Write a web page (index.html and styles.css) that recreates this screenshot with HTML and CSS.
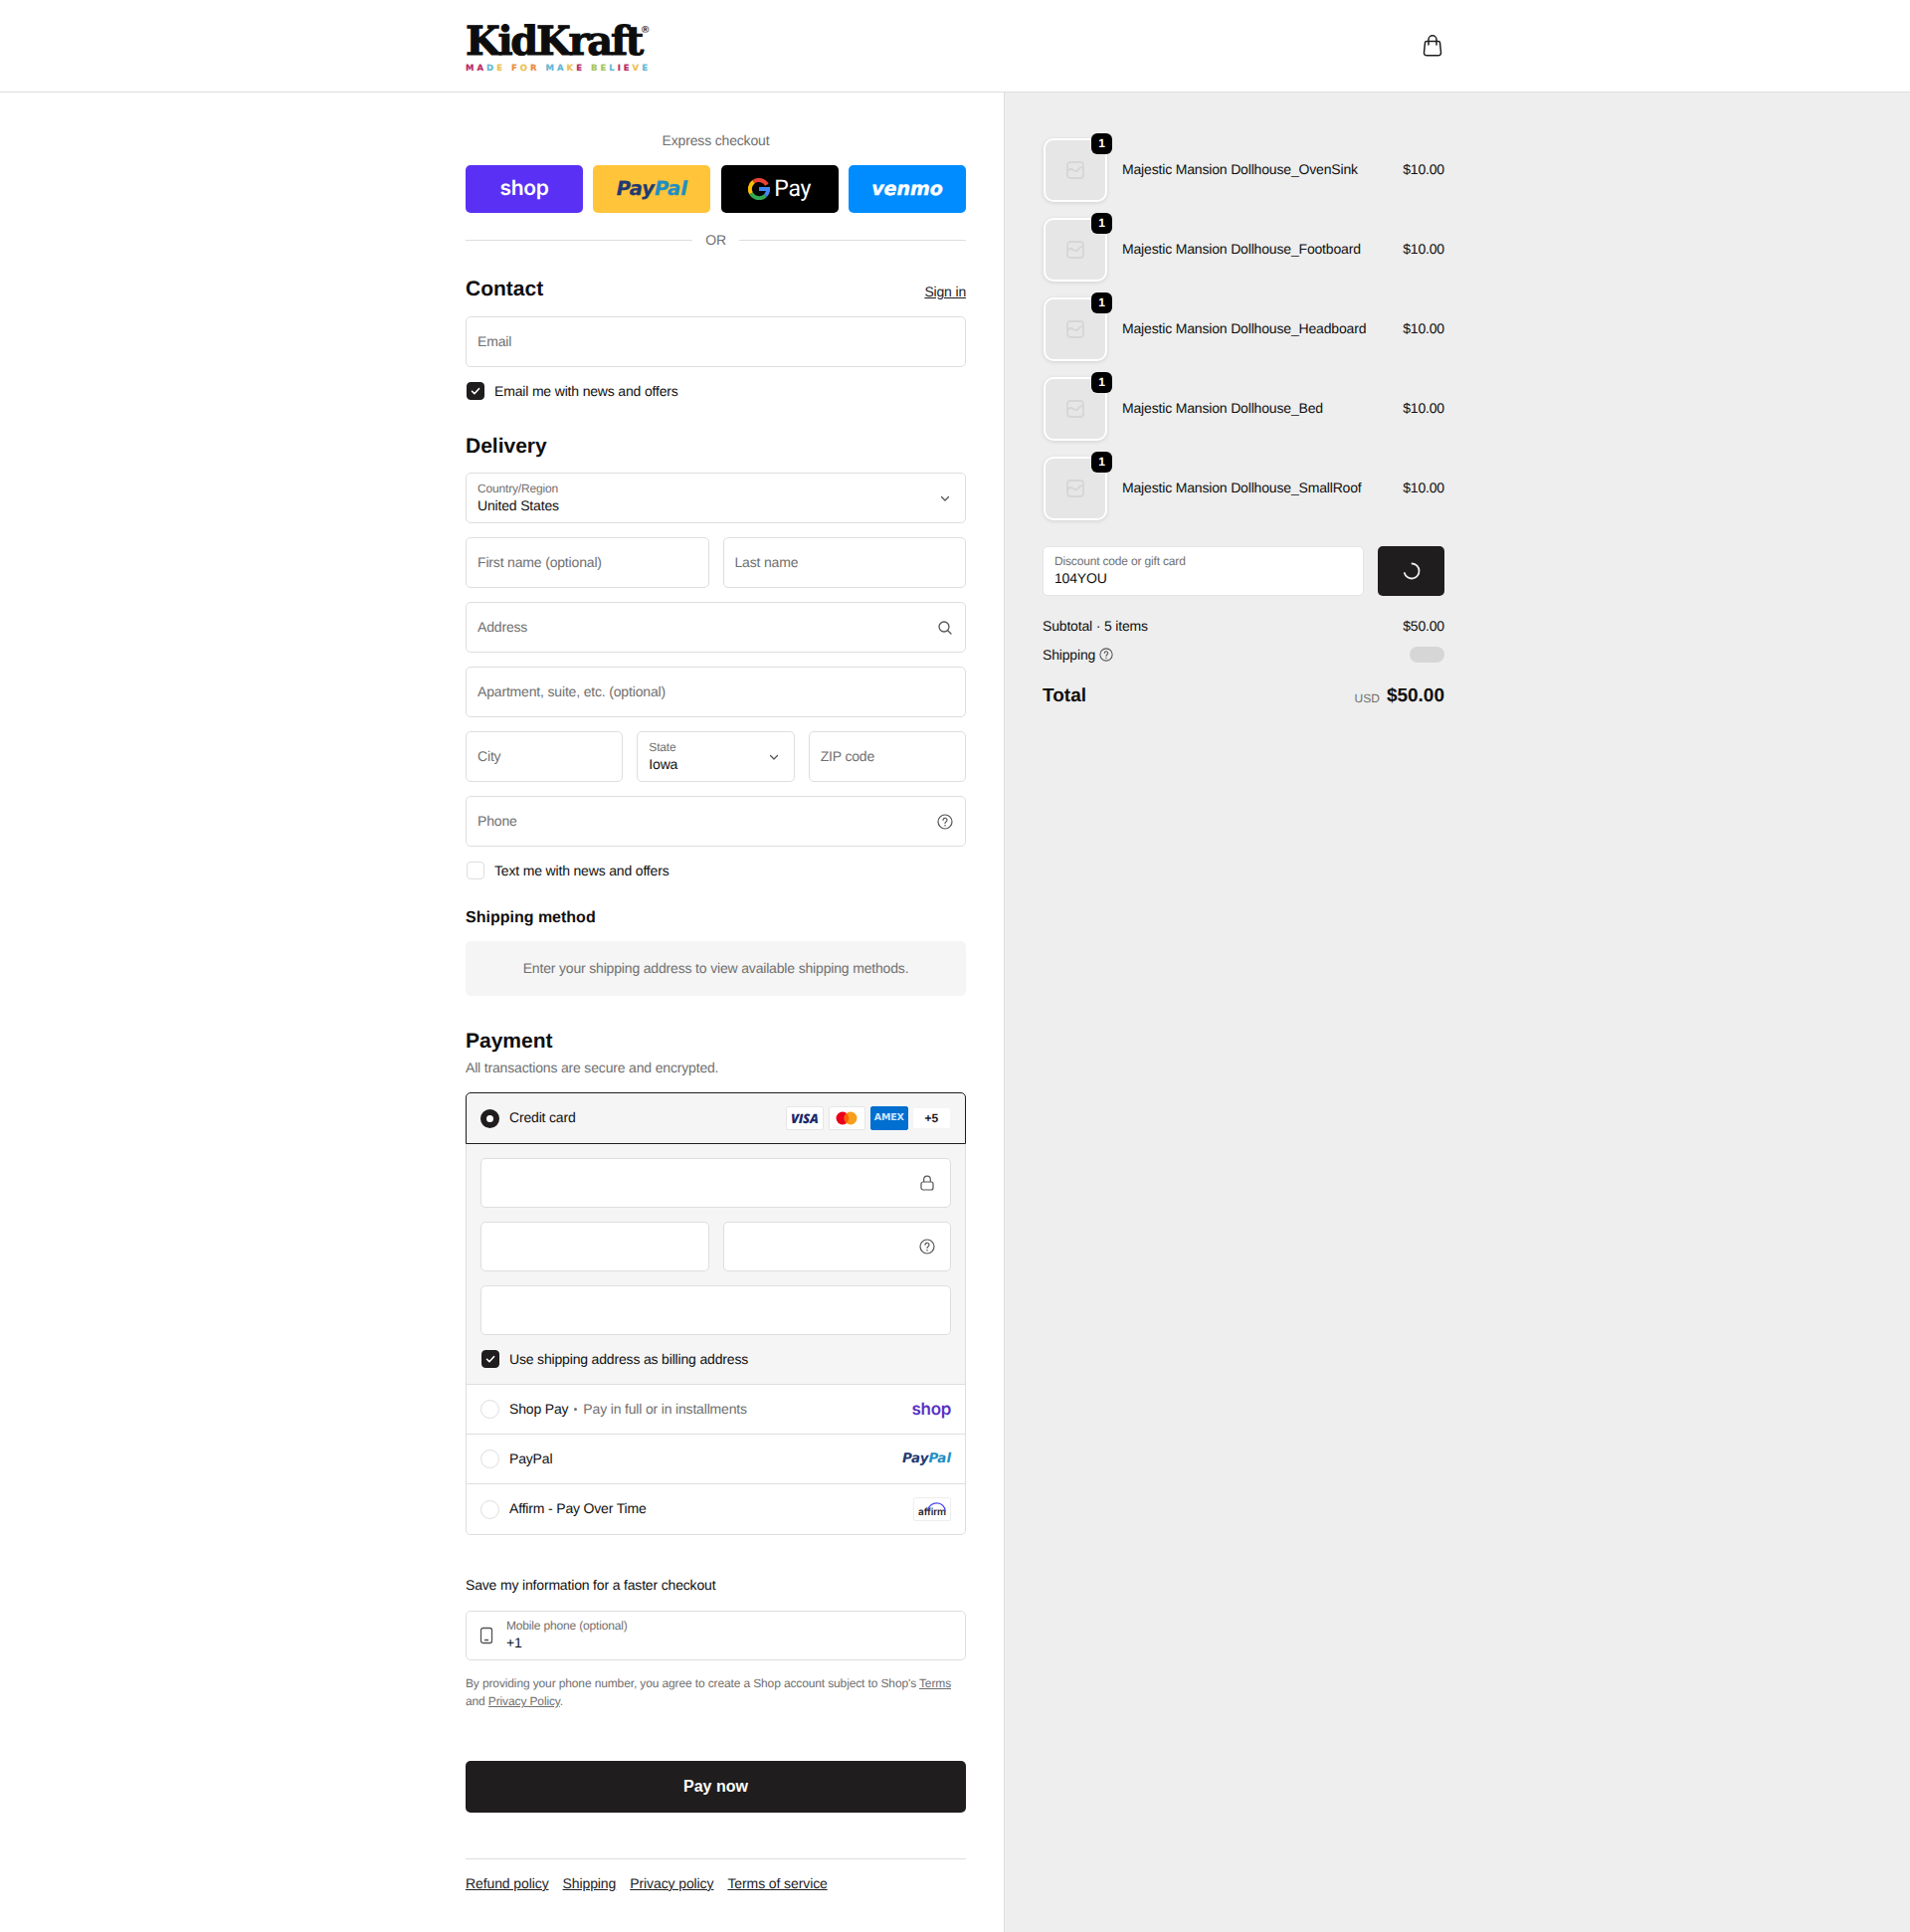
FILE: index.html
```html
<!DOCTYPE html>
<html lang="en">
  <head>
    <meta charset="UTF-8" />
    <meta name="viewport" content="width=device-width, initial-scale=1.0" />
    <title>Checkout - KidKraft</title>
    <link rel="stylesheet" href="styles.css">
  </head>
  <body>
    <header class="topbar">
      <div class="topbar-inner">
        <a class="logo">
          <span class="logo-name">KidKraft<sup>®</sup></span>
          <span class="logo-tag"><i class="c1">M</i><i class="c1">A</i><i class="c2">D</i><i class="c3">E</i> <i class="c4">F</i><i class="c3">O</i><i class="c4">R</i> <i class="c2">M</i><i class="c2">A</i><i class="c3">K</i><i class="c1">E</i> <i class="c5">B</i><i class="c5">E</i><i class="c2">L</i><i class="c1">I</i><i class="c1">E</i><i class="c3">V</i><i class="c2">E</i></span>
        </a>
        <svg class="bag" viewBox="0 0 20 24" width="20" height="24" fill="none" stroke="#1f1d1e" stroke-width="1.5"><path d="M4 7.500h12c.8 0 1.400.5 1.500 1.300l1 10c.2 1.700-1 3-2.700 3H4.200c-1.700 0-2.900-1.300-2.700-3l1-10C2.600 8 3.200 7.500 4 7.500z"/><path d="M6 11V5.800a4 4 0 0 1 8 0V11" stroke-linecap="round"/></svg>
      </div>
    </header>

    <div class="page">
      <main class="left">
        <p class="express-label">Express checkout</p>
        <div class="express">
          <div class="ex-btn ex-shop"><span>shop</span></div>
          <div class="ex-btn ex-paypal"><b>Pay</b><em>Pal</em></div>
          <div class="ex-btn ex-gpay">
            <svg viewBox="0 0 24 24" width="22" height="22" fill="none" stroke-width="4.4"><path d="M20.600 7.400A10 10 0 0 0 6 4" stroke="#ea4335"/><path d="M6 4a10 10 0 0 0-2.600 13" stroke="#fbbc04"/><path d="M3.400 17a10 10 0 0 0 15.600 2.200" stroke="#34a853"/><path d="M19 19.200c2-2 3.100-4.400 3-7.200H12" stroke="#4285f4"/></svg>
            <span>Pay</span>
          </div>
          <div class="ex-btn ex-venmo"><span>venmo</span></div>
        </div>
        <div class="or"><span>OR</span></div>

        <div class="head-row">
          <h2>Contact</h2>
          <a class="link">Sign in</a>
        </div>
        <div class="field"><span class="ph">Email</span></div>
        <label class="check"><span class="box on"><svg viewBox="0 0 12 12" width="12" height="12"><path d="M2.500 6.300l2.400 2.400 4.600-5" fill="none" stroke="#fff" stroke-width="1.600" stroke-linecap="round" stroke-linejoin="round"/></svg></span>Email me with news and offers</label>

        <h2 class="delivery">Delivery</h2>
        <div class="form-grid">
          <div class="field select full">
            <div><small>Country/Region</small><span>United States</span></div>
            <svg class="chev" viewBox="0 0 14 14" width="14" height="14"><path d="M3.500 5.500L7 9l3.500-3.500" fill="none" stroke="#545454" stroke-width="1.300" stroke-linecap="round" stroke-linejoin="round"/></svg>
          </div>
          <div class="two full">
            <div class="field"><span class="ph">First name (optional)</span></div>
            <div class="field"><span class="ph">Last name</span></div>
          </div>
          <div class="field full">
            <span class="ph">Address</span>
            <svg class="end-icon" viewBox="0 0 16 16" width="16" height="16" fill="none" stroke="#545454" stroke-width="1.300"><circle cx="7" cy="7" r="5"/><path d="M10.700 10.700L14 14" stroke-linecap="round"/></svg>
          </div>
          <div class="field full"><span class="ph">Apartment, suite, etc. (optional)</span></div>
          <div class="three full">
            <div class="field"><span class="ph">City</span></div>
            <div class="field select">
              <div><small>State</small><span>Iowa</span></div>
              <svg class="chev" viewBox="0 0 14 14" width="14" height="14"><path d="M3.500 5.500L7 9l3.500-3.500" fill="none" stroke="#545454" stroke-width="1.300" stroke-linecap="round" stroke-linejoin="round"/></svg>
            </div>
            <div class="field"><span class="ph">ZIP code</span></div>
          </div>
          <div class="field full">
            <span class="ph">Phone</span>
            <svg class="end-icon" viewBox="0 0 16 16" width="16" height="16" fill="none" stroke="#545454" stroke-width="1.200"><circle cx="8" cy="8" r="7"/><path d="M6 6.300a2 2 0 1 1 3 1.700c-.7.400-1 .8-1 1.500" stroke-linecap="round"/><circle cx="8" cy="11.700" r=".8" fill="#545454" stroke="none"/></svg>
          </div>
        </div>
        <label class="check"><span class="box"></span>Text me with news and offers</label>

        <h3>Shipping method</h3>
        <div class="notice">Enter your shipping address to view available shipping methods.</div>

        <h2 class="payment">Payment</h2>
        <p class="secure">All transactions are secure and encrypted.</p>
        <div class="pay-box">
          <div class="pay-row selected">
            <span class="radio on"></span>
            <span class="pay-name">Credit card</span>
            <div class="cards">
              <span class="card c-visa">VISA</span>
              <span class="card c-mc"><svg viewBox="0 0 24 16" width="24" height="16"><circle cx="8" cy="8" r="6.500" fill="#eb001b"/><circle cx="16" cy="8" r="6.500" fill="#f79e1b"/><path d="M12 3.100a6.500 6.500 0 0 1 0 9.800 6.500 6.500 0 0 1 0-9.800z" fill="#ff5f00"/></svg></span>
              <span class="card c-amex">AMEX</span>
              <span class="card c-more">+5</span>
            </div>
          </div>
          <div class="card-form">
            <div class="field small">
              <svg class="end-icon" viewBox="0 0 16 16" width="16" height="16" fill="none" stroke="#545454" stroke-width="1.200"><rect x="2" y="7" width="12" height="8" rx="2"/><path d="M4.700 7V4.500a3.300 3.300 0 0 1 6.600 0V7"/></svg>
            </div>
            <div class="two">
              <div class="field small"></div>
              <div class="field small">
                <svg class="end-icon" viewBox="0 0 16 16" width="16" height="16" fill="none" stroke="#545454" stroke-width="1.200"><circle cx="8" cy="8" r="7"/><path d="M6 6.300a2 2 0 1 1 3 1.700c-.7.400-1 .8-1 1.500" stroke-linecap="round"/><circle cx="8" cy="11.700" r=".8" fill="#545454" stroke="none"/></svg>
              </div>
            </div>
            <div class="field small"></div>
            <label class="check billing"><span class="box on"><svg viewBox="0 0 12 12" width="12" height="12"><path d="M2.500 6.300l2.400 2.400 4.600-5" fill="none" stroke="#fff" stroke-width="1.600" stroke-linecap="round" stroke-linejoin="round"/></svg></span>Use shipping address as billing address</label>
          </div>
          <div class="pay-row">
            <span class="radio"></span>
            <span class="pay-name">Shop Pay<i class="dot"></i><span class="muted">Pay in full or in installments</span></span>
            <span class="shop-mark">shop</span>
          </div>
          <div class="pay-row">
            <span class="radio"></span>
            <span class="pay-name">PayPal</span>
            <span class="paypal-mark"><b>Pay</b><em>Pal</em></span>
          </div>
          <div class="pay-row last">
            <span class="radio"></span>
            <span class="pay-name">Affirm - Pay Over Time</span>
            <span class="affirm-mark">affirm<svg viewBox="0 0 24 12" width="24" height="12"><path d="M2 10.500C4 4 9 1.500 13 1.500c5 0 9 4 9 9" fill="none" stroke="#4a4af4" stroke-width="1.300"/></svg></span>
          </div>
        </div>

        <p class="save-label">Save my information for a faster checkout</p>
        <div class="field mobile">
          <svg viewBox="0 0 14 18" width="14" height="18" fill="none" stroke="#545454" stroke-width="1.300"><rect x="1.500" y="1.500" width="11" height="15" rx="2"/><path d="M5.500 13.500h3" stroke-linecap="round"/></svg>
          <div><small>Mobile phone (optional)</small><span>+1</span></div>
        </div>
        <p class="terms">By providing your phone number, you agree to create a Shop account subject to Shop's <a>Terms</a> and <a>Privacy Policy</a>.</p>

        <button class="pay-now">Pay now</button>

        <footer class="foot">
          <a class="link">Refund policy</a>
          <a class="link">Shipping</a>
          <a class="link">Privacy policy</a>
          <a class="link">Terms of service</a>
        </footer>
      </main>

      <aside class="right">
        <div class="items">
          <div class="item"><div class="thumb"><svg viewBox="0 0 18 18" width="18" height="18" fill="none" stroke="#d6d6d6" stroke-width="1.800"><rect x="1" y="1" width="16" height="16" rx="3"/><path d="M1 10c2-2.500 4-2.500 6-1s4 1.500 5.500-1 3-2 4.500-1"/></svg><b class="qty">1</b></div><span class="item-name">Majestic Mansion Dollhouse_OvenSink</span><span>$10.00</span></div>
          <div class="item"><div class="thumb"><svg viewBox="0 0 18 18" width="18" height="18" fill="none" stroke="#d6d6d6" stroke-width="1.800"><rect x="1" y="1" width="16" height="16" rx="3"/><path d="M1 10c2-2.500 4-2.500 6-1s4 1.500 5.500-1 3-2 4.500-1"/></svg><b class="qty">1</b></div><span class="item-name">Majestic Mansion Dollhouse_Footboard</span><span>$10.00</span></div>
          <div class="item"><div class="thumb"><svg viewBox="0 0 18 18" width="18" height="18" fill="none" stroke="#d6d6d6" stroke-width="1.800"><rect x="1" y="1" width="16" height="16" rx="3"/><path d="M1 10c2-2.500 4-2.500 6-1s4 1.500 5.500-1 3-2 4.500-1"/></svg><b class="qty">1</b></div><span class="item-name">Majestic Mansion Dollhouse_Headboard</span><span>$10.00</span></div>
          <div class="item"><div class="thumb"><svg viewBox="0 0 18 18" width="18" height="18" fill="none" stroke="#d6d6d6" stroke-width="1.800"><rect x="1" y="1" width="16" height="16" rx="3"/><path d="M1 10c2-2.500 4-2.500 6-1s4 1.500 5.500-1 3-2 4.500-1"/></svg><b class="qty">1</b></div><span class="item-name">Majestic Mansion Dollhouse_Bed</span><span>$10.00</span></div>
          <div class="item"><div class="thumb"><svg viewBox="0 0 18 18" width="18" height="18" fill="none" stroke="#d6d6d6" stroke-width="1.800"><rect x="1" y="1" width="16" height="16" rx="3"/><path d="M1 10c2-2.500 4-2.500 6-1s4 1.500 5.500-1 3-2 4.500-1"/></svg><b class="qty">1</b></div><span class="item-name">Majestic Mansion Dollhouse_SmallRoof</span><span>$10.00</span></div>
        </div>

        <div class="discount">
          <div class="field discount-field"><div><small>Discount code or gift card</small><span>104YOU</span></div></div>
          <button class="apply"><svg viewBox="0 0 20 20" width="20" height="20"><path d="M10.500 2.500a7.500 7.500 0 1 1-7.700 9.500" fill="none" stroke="#eee" stroke-width="1.800" stroke-linecap="round"/></svg></button>
        </div>

        <div class="sum-row first"><span>Subtotal · 5 items</span><span>$50.00</span></div>
        <div class="sum-row ship">
          <span class="ship-label">Shipping <svg viewBox="0 0 16 16" width="14" height="14" fill="none" stroke="#545454" stroke-width="1.200"><circle cx="8" cy="8" r="7"/><path d="M6 6.300a2 2 0 1 1 3 1.700c-.7.400-1 .8-1 1.500" stroke-linecap="round"/><circle cx="8" cy="11.700" r=".8" fill="#545454" stroke="none"/></svg></span>
          <span class="skeleton"></span>
        </div>
        <div class="total-row">
          <span class="total-label">Total</span>
          <span class="total-value"><small>USD</small><b>$50.00</b></span>
        </div>
      </aside>
    </div>
  </body>
</html>
```

FILE: styles.css
```css
* {
  box-sizing: border-box;
}
body {
  margin: 0;
  font-family: "Liberation Sans", Arial, sans-serif;
  font-size: 14px;
  line-height: 18px;
  letter-spacing: -0.17px;
  color: #1f1d1e;
  background-color: #fff;
  text-rendering: geometricPrecision;
}
p {
  margin: 0;
}
i {
  font-style: normal;
}

/* header */
.topbar {
  height: 93px;
  border-bottom: 1px solid #dedede;
}
.topbar-inner {
  width: 984px;
  margin-left: 468px;
  height: 92px;
  display: flex;
  align-items: center;
  justify-content: space-between;
}
.logo {
  display: block;
  width: 186px;
  padding-top: 4px;
}
.logo-name {
  display: block;
  font-family: "DejaVu Serif", serif;
  font-weight: bold;
  font-size: 40px;
  line-height: 40px;
  letter-spacing: -2.300px;
  color: #0d0d0d;
  -webkit-text-stroke: 1px #0d0d0d;
  white-space: nowrap;
}
.logo-name sup {
  font-family: "Liberation Sans", sans-serif;
  font-size: 10px;
  line-height: 0;
  letter-spacing: 0;
  vertical-align: 22px;
  -webkit-text-stroke: 0;
}
.logo-tag {
  display: block;
  margin-top: 2px;
  font-family: "DejaVu Sans", sans-serif;
  font-weight: bold;
  font-size: 8.500px;
  line-height: 11px;
  letter-spacing: 3px;
  white-space: nowrap;
  -webkit-text-stroke: 0.2px;
}
.c1 { color: #b92a64; }
.c2 { color: #62b7d6; }
.c3 { color: #eec04f; }
.c4 { color: #e98b3e; }
.c5 { color: #a6c45a; }
.bag {
  margin-right: 2px;
}

/* page split */
.page {
  display: grid;
  grid-template-columns: 1010px 1fr;
  min-height: 1849px;
}
.left {
  padding: 39px 38px 0 468px;
  border-right: 1px solid #dedede;
}
.right {
  padding: 46px 0 0 38px;
  background-color: #eee;
}

/* express */
.express-label {
  text-align: center;
  color: #707070;
}
.express {
  display: grid;
  grid-template-columns: repeat(4, 1fr);
  gap: 10.500px;
  margin-top: 16px;
}
.ex-btn {
  height: 48px;
  border-radius: 5px;
  display: flex;
  align-items: center;
  justify-content: center;
  letter-spacing: 0;
}
.ex-shop {
  background-color: #5a31f4;
  color: #fff;
  font-family: Inter, sans-serif;
  font-weight: 600;
  font-size: 21px;
  letter-spacing: -0.3px;
}
.ex-paypal {
  background-color: #ffc439;
  font-family: "DejaVu Sans", sans-serif;
  font-size: 19.500px;
  font-style: italic;
  font-weight: bold;
  -webkit-text-stroke: 0.3px;
}
.ex-paypal b, .paypal-mark b {
  font-weight: bold;
  color: #1f3a73;
}
.ex-paypal em, .paypal-mark em {
  color: #1d8fc4;
}
.ex-gpay {
  background-color: #000;
  color: #fff;
  gap: 4px;
  font-family: Roboto, sans-serif;
  font-size: 23px;
  letter-spacing: -0.3px;
}
.ex-venmo {
  background-color: #008cff;
  color: #fff;
  font-family: "DejaVu Sans", sans-serif;
  font-style: italic;
  font-weight: bold;
  font-size: 19px;
  -webkit-text-stroke: 0.4px;
}
.or {
  display: flex;
  align-items: center;
  gap: 13px;
  margin-top: 18px;
  color: #707070;
}
.or::before, .or::after {
  content: "";
  flex: 1;
  border-top: 1px solid #dedede;
}

/* headings */
h2 {
  margin: 0;
  font-size: 21px;
  line-height: 26px;
  font-weight: bold;
  letter-spacing: 0;
  color: #0f0f0f;
}
h3 {
  margin: 28px 0 0;
  font-size: 16px;
  line-height: 20px;
  letter-spacing: 0;
  color: #0f0f0f;
}
.head-row {
  display: flex;
  justify-content: space-between;
  align-items: flex-end;
  margin-top: 28px;
}
.head-row .link {
  padding-bottom: 2px;
}
.link {
  color: #1f1d1e;
  text-decoration: underline;
}
.delivery {
  margin-top: 33px;
}
.payment {
  margin-top: 33px;
}
.secure {
  margin-top: 4px;
  color: #707070;
}

/* fields */
.field {
  position: relative;
  height: 51px;
  border: 1px solid #dedede;
  border-radius: 5px;
  background-color: #fff;
  padding: 0 11px;
  display: flex;
  align-items: center;
  justify-content: space-between;
}
.head-row + .field {
  margin-top: 14px;
}
.field.small {
  height: 50px;
  justify-content: flex-end;
  padding-right: 14px;
}
.ph {
  color: #707070;
  padding-bottom: 2px;
}
.field small {
  display: block;
  margin-bottom: 1px;
  font-size: 12px;
  line-height: 15px;
  color: #707070;
}
.field div span {
  display: block;
  line-height: 17px;
  color: #0f0f0f;
}
.chev {
  margin-right: 2px;
}
.end-icon {
  margin-right: 1px;
}
.form-grid {
  display: grid;
  gap: 14px;
  margin-top: 13px;
}
.two {
  display: grid;
  grid-template-columns: 1fr 1fr;
  gap: 14px;
}
.three {
  display: grid;
  grid-template-columns: 1fr 1fr 1fr;
  gap: 14px;
}

/* checkbox */
.check {
  display: flex;
  align-items: center;
  gap: 10px;
  margin-top: 14px;
  height: 20px;
  color: #0f0f0f;
}
.box {
  width: 18px;
  height: 18px;
  margin-left: 1px;
  border: 1px solid #dedede;
  border-radius: 4px;
  display: flex;
  align-items: center;
  justify-content: center;
}
.box.on {
  background-color: #1f1d1e;
  border-color: #1f1d1e;
}

.notice {
  margin-top: 13px;
  height: 55px;
  padding-bottom: 2px;
  background-color: #f5f5f5;
  border-radius: 5px;
  color: #707070;
  display: flex;
  align-items: center;
  justify-content: center;
}

/* payment */
.pay-box {
  margin-top: 16px;
  border: 1px solid #dedede;
  border-radius: 5px;
}
.pay-row {
  height: 50px;
  padding: 0 14px;
  display: flex;
  align-items: center;
  gap: 10px;
  border-bottom: 1px solid #dedede;
}
.pay-row.last {
  border-bottom: 0;
}
.pay-row.selected {
  height: 52px;
  margin: -1px -1px 0;
  padding: 0 15px 0 14px;
  border: 1px solid #1f1d1e;
  border-radius: 5px 5px 0 0;
  background-color: #f5f5f5;
}
.pay-name {
  flex: 1;
  color: #0f0f0f;
  padding-bottom: 2px;
}
.radio {
  width: 19px;
  height: 19px;
  border: 1px solid #dedede;
  border-radius: 50%;
  background-color: #fff;
}
.radio.on {
  border: 6px solid #1f1d1e;
}
.dot {
  display: inline-block;
  width: 3px;
  height: 3px;
  margin: 0 6px;
  background-color: #707070;
  border-radius: 50%;
  vertical-align: middle;
}
.muted {
  color: #707070;
}
.cards {
  display: flex;
  align-items: center;
  gap: 5px;
}
.card {
  width: 37.500px;
  height: 24px;
  border-radius: 2px;
  display: flex;
  align-items: center;
  justify-content: center;
  background-color: #fff;
  border: 1px solid #e6e6e6;
}
.c-visa {
  color: #1a2a6c;
  font-family: "Open Sans", sans-serif;
  font-style: italic;
  font-weight: 800;
  font-size: 13px;
  letter-spacing: -0.3px;
}
.c-amex {
  background-color: #016fd0;
  border-color: #016fd0;
  color: #cfe6ff;
  font-family: "DejaVu Sans", sans-serif;
  font-weight: bold;
  font-size: 9.500px;
  letter-spacing: -0.2px;
}
.c-more {
  height: 20px;
  border: 0;
  font-size: 12px;
  font-weight: bold;
  letter-spacing: 0;
}
.card-form {
  background-color: #f5f5f5;
  padding: 14px;
  display: grid;
  gap: 14px;
  border-bottom: 1px solid #dedede;
}
.check.billing {
  margin: 0 0 1px;
}
.check.billing .box {
  margin-left: 1px;
}
.shop-mark {
  color: #5a31c4;
  font-family: Inter, sans-serif;
  font-weight: 600;
  font-size: 17px;
  letter-spacing: -0.3px;
}
.paypal-mark {
  font-family: "DejaVu Sans", sans-serif;
  font-style: italic;
  font-weight: bold;
  font-size: 13.400px;
  letter-spacing: 0;
}
.affirm-mark {
  position: relative;
  width: 38px;
  height: 24px;
  border: 1px solid #eee;
  border-radius: 2px;
  font-family: Inter, sans-serif;
  font-size: 10px;
  font-weight: 600;
  line-height: 28px;
  text-align: center;
}
.affirm-mark svg {
  position: absolute;
  top: 3px;
  left: 11px;
  width: 22px;
}

/* save info */
.save-label {
  margin-top: 41px;
  color: #0f0f0f;
}
.mobile {
  margin-top: 17px;
  height: 50px;
  justify-content: flex-start;
  gap: 13px;
  padding-left: 13px;
}
.mobile div, .discount-field div {
  padding-bottom: 2px;
}
.terms {
  margin-top: 14px;
  font-size: 12px;
  letter-spacing: -0.13px;
  color: #707070;
}
.terms a {
  text-decoration: underline;
}
.pay-now {
  display: block;
  width: 100%;
  height: 52px;
  margin-top: 51px;
  border: 0;
  border-radius: 5px;
  background-color: #1f1d1e;
  color: #fff;
  font-family: inherit;
  font-size: 16px;
  font-weight: bold;
}
.foot {
  margin-top: 46px;
  padding-top: 15px;
  border-top: 1px solid #dedede;
  display: flex;
  gap: 14px;
  letter-spacing: -0.1px;
}

/* order summary */
.right > * {
  width: 404px;
}
.item {
  display: flex;
  align-items: center;
  height: 64px;
  margin-bottom: 16px;
  color: #0f0f0f;
}
.item > span {
  padding-bottom: 2px;
}
.thumb {
  position: relative;
  width: 64px;
  height: 64px;
  margin-left: 1px;
  border: 2px solid #fff;
  border-radius: 10px;
  background-color: #e6e6e6;
  box-shadow: 0 1px 4px rgba(0, 0, 0, 0.12);
  display: flex;
  align-items: center;
  justify-content: center;
}
.qty {
  position: absolute;
  top: -7px;
  right: -7px;
  width: 21px;
  height: 21px;
  border-radius: 6px;
  background-color: #000;
  color: #fff;
  font-size: 12px;
  line-height: 21px;
  text-align: center;
}
.item-name {
  flex: 1;
  margin-left: 15px;
}
.discount {
  display: flex;
  gap: 14px;
  margin-top: 26px;
}
.discount-field {
  flex: 1;
  height: 50px;
  border-color: #e4e4e4;
}
.apply {
  width: 67px;
  height: 50px;
  border: 0;
  border-radius: 5px;
  background-color: #1f1d1e;
  display: flex;
  align-items: center;
  justify-content: center;
}
.sum-row {
  display: flex;
  justify-content: space-between;
  align-items: center;
  margin-top: 13px;
  height: 18px;
  color: #0f0f0f;
}
.sum-row.first {
  margin-top: 21px;
}
.sum-row.ship {
  margin-top: 11px;
}
.ship-label {
  display: flex;
  align-items: center;
  gap: 4px;
}
.skeleton {
  width: 35px;
  height: 16px;
  border-radius: 8px;
  background-color: #d6d6d6;
}
.total-row {
  display: flex;
  justify-content: space-between;
  align-items: center;
  margin-top: 20px;
  height: 26px;
  letter-spacing: 0;
}
.total-label, .total-value b {
  font-size: 19px;
  font-weight: bold;
  color: #0f0f0f;
}
.total-value {
  display: flex;
  align-items: center;
  gap: 7px;
}
.total-value small {
  font-size: 12px;
  color: #707070;
  padding-top: 3px;
}
```
